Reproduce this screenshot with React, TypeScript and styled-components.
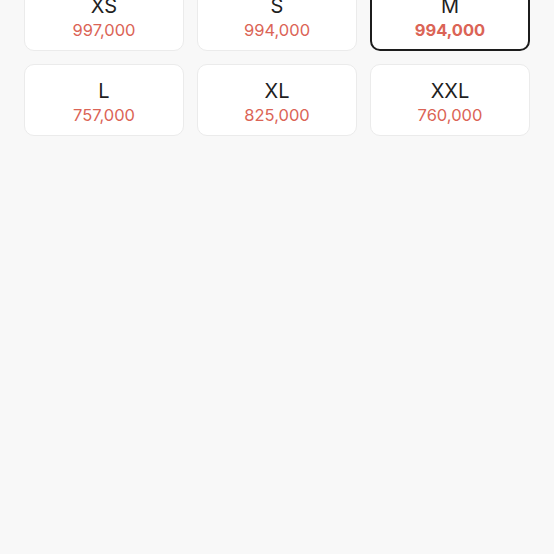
import React, { useState } from "react";
import styled, { createGlobalStyle } from "styled-components";

const GlobalStyle = createGlobalStyle`
  html, body {
    margin: 0;
    padding: 0;
    background: #f8f8f8;
    font-family: "Inter", "Noto Sans CJK KR", sans-serif;
  }
`;

const Page = styled.div`
  min-height: 554px;
  background: #f8f8f8;
  overflow: hidden;
`;

// the list is scrolled a little, so the first row is cut at the top
const SizeGrid = styled.div`
  display: grid;
  grid-template-columns: repeat(3, 1fr);
  gap: 13px;
  padding: 0 24px;
  margin-top: -21px;
`;

const SizeCard = styled.button<{ selected: boolean }>`
  height: 72px;
  box-sizing: border-box;
  display: flex;
  flex-direction: column;
  align-items: center;
  justify-content: center;
  gap: 2px;
  padding: 4px 0 0;
  background: #fff;
  border-radius: 10px;
  border: ${({ selected }) => (selected ? "2px solid #1c1c1c" : "1px solid #ebebeb")};
  cursor: pointer;
  font-family: inherit;
`;

const SizeName = styled.span`
  font-size: 20px;
  line-height: 23px;
  color: #1f1f1f;
  font-weight: 400;
`;

const Price = styled.span<{ selected: boolean }>`
  font-size: 16.5px;
  line-height: 20px;
  color: #db6456;
  font-weight: ${({ selected }) => (selected ? 700 : 400)};
`;

const sizes = [
  { name: "XS", price: 997000 },
  { name: "S", price: 994000 },
  { name: "M", price: 994000 },
  { name: "L", price: 757000 },
  { name: "XL", price: 825000 },
  { name: "XXL", price: 760000 },
];

const App = () => {
  const [selected, setSelected] = useState<string>("M");

  return (
    <Page>
      <GlobalStyle />
      <SizeGrid>
        {sizes.map((s) => (
          <SizeCard key={s.name} selected={selected === s.name} onClick={() => setSelected(s.name)}>
            <SizeName>{s.name}</SizeName>
            <Price selected={selected === s.name}>{s.price.toLocaleString("en-US")}</Price>
          </SizeCard>
        ))}
      </SizeGrid>
    </Page>
  );
};

export default App;
